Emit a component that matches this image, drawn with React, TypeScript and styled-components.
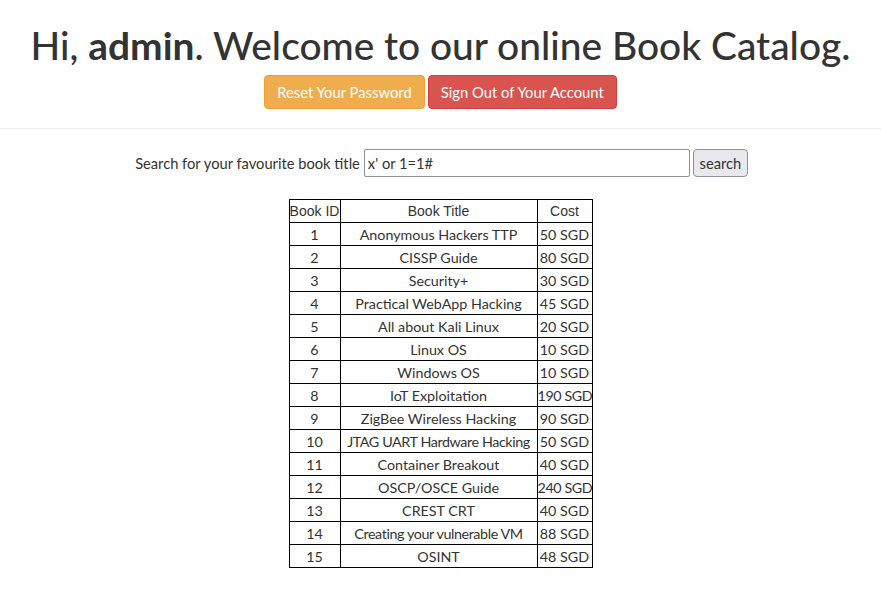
import React from "react";
import styled, { createGlobalStyle } from "styled-components";

const Global = createGlobalStyle`
  html, body { margin: 0; padding: 0; background: #fff; }
  body {
    font-family: Lato, "Noto Sans", sans-serif;
    color: #333;
    font-size: 14.7px;
  }
`;

const Header = styled.header`
  text-align: center;
  padding-top: 22px;
`;

const Title = styled.h1`
  margin: 0;
  font-size: 38.9px;
  font-weight: 500;
  line-height: 46px;
  color: #333;
  white-space: nowrap;
`;

const ButtonRow = styled.div`
  display: flex;
  justify-content: center;
  gap: 3px;
  margin-top: 7px;
`;

const ActionButton = styled.button<{ $bg: string; $border: string }>`
  font-family: inherit;
  font-size: 14.8px;
  color: #fff;
  background: ${(p) => p.$bg};
  border: 1px solid ${(p) => p.$border};
  border-radius: 4px;
  height: 34px;
  padding: 0 12px;
  cursor: pointer;
`;

const Rule = styled.hr`
  border: 0;
  border-top: 1px solid #eee;
  margin: 19px 0 0;
`;

const SearchForm = styled.form`
  display: flex;
  justify-content: center;
  align-items: center;
  margin-top: 20px;
  padding-left: 2px;
  gap: 4px;
`;

const Label = styled.label`
  font-size: 14.7px;
  color: #333;
`;

const Input = styled.input`
  width: 326px;
  height: 28px;
  box-sizing: border-box;
  border: 1px solid #8f8f9d;
  border-radius: 2px;
  padding: 0 3px;
  font-family: inherit;
  font-size: 14.7px;
  color: #333;
`;

const SearchButton = styled.button`
  width: 55px;
  height: 28px;
  box-sizing: border-box;
  border: 1px solid #8f8f9d;
  border-radius: 4px;
  background: #e9e9ed;
  padding: 0;
  margin-left: -1px;
  font-family: inherit;
  font-size: 14.7px;
  color: #333;
`;

const TableWrap = styled.div`
  display: flex;
  justify-content: center;
  margin-top: 22px;
`;

const Table = styled.table`
  border-collapse: collapse;
  table-layout: fixed;
  width: 300px;
`;

const Th = styled.th<{ $w: number }>`
  width: ${(p) => p.$w}px;
  font-family: "Liberation Sans", Arial, sans-serif;
  font-weight: normal;
  font-size: 14px;
  border: 1px solid #000;
  height: 22px;
  padding: 0;
  color: #333;
  white-space: nowrap;
`;

const Td = styled.td<{ $tight?: boolean }>`
  border: 1px solid #000;
  text-align: center;
  height: 22px;
  padding: 0;
  font-size: 14.3px;
  letter-spacing: ${(p) => (p.$tight ? "-0.4px" : "0")};
  color: #333;
  white-space: nowrap;
`;

const books: [number, string, string][] = [
  [1, "Anonymous Hackers TTP", "50 SGD"],
  [2, "CISSP Guide", "80 SGD"],
  [3, "Security+", "30 SGD"],
  [4, "Practical WebApp Hacking", "45 SGD"],
  [5, "All about Kali Linux", "20 SGD"],
  [6, "Linux OS", "10 SGD"],
  [7, "Windows OS", "10 SGD"],
  [8, "IoT Exploitation", "190 SGD"],
  [9, "ZigBee Wireless Hacking", "90 SGD"],
  [10, "JTAG UART Hardware Hacking", "50 SGD"],
  [11, "Container Breakout", "40 SGD"],
  [12, "OSCP/OSCE Guide", "240 SGD"],
  [13, "CREST CRT", "40 SGD"],
  [14, "Creating your vulnerable VM", "88 SGD"],
  [15, "OSINT", "48 SGD"],
];

export default function App() {
  return (
    <>
      <Global />
      <Header>
        <Title>
          Hi, <b>admin</b>. Welcome to our online Book Catalog.
        </Title>
        <ButtonRow>
          <ActionButton $bg="#f0ad4e" $border="#eea236">Reset Your Password</ActionButton>
          <ActionButton $bg="#d9534f" $border="#d43f3a">Sign Out of Your Account</ActionButton>
        </ButtonRow>
      </Header>
      <Rule />
      <SearchForm onSubmit={(e) => e.preventDefault()}>
        <Label htmlFor="q">Search for your favourite book title</Label>
        <Input id="q" defaultValue="x' or 1=1#" />
        <SearchButton type="submit">search</SearchButton>
      </SearchForm>
      <TableWrap>
        <Table>
          <thead>
            <tr>
              <Th $w={50}>Book ID</Th>
              <Th $w={196}>Book Title</Th>
              <Th $w={54}>Cost</Th>
            </tr>
          </thead>
          <tbody>
            {books.map(([id, title, cost]) => (
              <tr key={id}>
                <Td>{id}</Td>
                <Td $tight={title.length > 25}>{title}</Td>
                <Td $tight={cost.length > 6}>{cost}</Td>
              </tr>
            ))}
          </tbody>
        </Table>
      </TableWrap>
    </>
  );
}
